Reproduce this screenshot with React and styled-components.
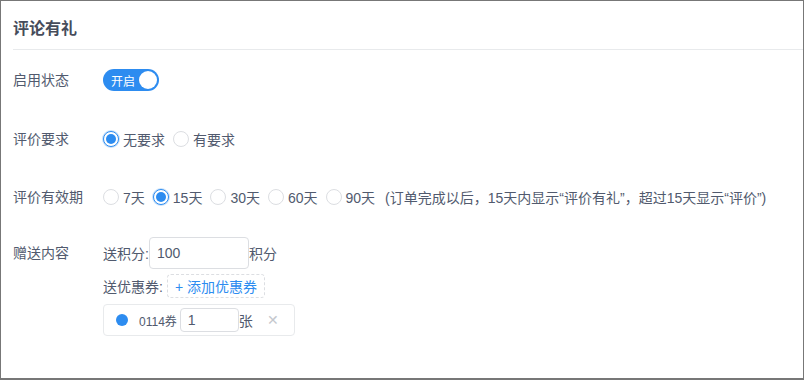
import React, { useState } from 'react';
import styled, { createGlobalStyle } from 'styled-components';

const GlobalStyle = createGlobalStyle`
  body {
    margin: 0;
    background: #fff;
    font-family: "Liberation Sans", "Noto Sans CJK SC", sans-serif;
    font-size: 14px;
    color: #515a6e;
  }
  * { box-sizing: border-box; }
`;

const Frame = styled.div`
  width: 804px;
  height: 380px;
  border: 1px solid #777;
  border-bottom-width: 2px;
  background: #fff;
`;

const Header = styled.div`
  margin-left: 12px;
  height: 49px;
  border-bottom: 1px solid #e8eaec;
  display: flex;
  align-items: center;
  padding-top: 3px;
  font-size: 16px;
  font-weight: bold;
  color: #464c5b;
`;

const Body = styled.div`
  padding: 14px 0 0 12px;
  display: flex;
  flex-direction: column;
`;

const FormItem = styled.div`
  display: flex;
  align-items: flex-start;
  margin-bottom: ${p => p.gap ?? 26}px;
`;

const Label = styled.div`
  width: 90px;
  flex: none;
  line-height: 32px;
  height: 32px;
`;

const Control = styled.div`
  display: flex;
  flex-direction: ${p => (p.column ? 'column' : 'row')};
  align-items: ${p => (p.column ? 'flex-start' : 'center')};
  min-height: 32px;
`;

const Switch = styled.button`
  width: 56px;
  height: 22px;
  border: none;
  border-radius: 11px;
  background: #2d8cf0;
  padding: 0 2px 0 8px;
  display: flex;
  align-items: center;
  justify-content: space-between;
  color: #fff;
  font-family: inherit;
  font-size: 12px;
  cursor: pointer;
`;

const Knob = styled.span`
  width: 18px;
  height: 18px;
  border-radius: 50%;
  background: #fff;
`;

const RadioWrap = styled.label`
  display: inline-flex;
  align-items: center;
  margin-right: 8px;
  cursor: pointer;
  white-space: nowrap;
`;

const RadioDot = styled.span`
  width: 16px;
  height: 16px;
  border-radius: 50%;
  margin-right: 4px;
  border: 1px solid ${p => (p.checked ? '#2d8cf0' : '#dcdee2')};
  box-shadow: ${p => (p.checked ? '0 0 0 1px rgba(45,140,240,0.25)' : 'none')};
  background: #fff;
  display: flex;
  align-items: center;
  justify-content: center;
  &::after {
    content: '';
    width: 10px;
    height: 10px;
    border-radius: 50%;
    background: ${p => (p.checked ? '#2d8cf0' : 'transparent')};
  }
`;

const Note = styled.span`
  margin-left: 2px;
  white-space: nowrap;
`;

const SubRow = styled.div`
  display: flex;
  align-items: center;
  height: ${p => p.h}px;
  margin-bottom: ${p => p.mb ?? 0}px;
`;

const Input = styled.input`
  width: ${p => p.w}px;
  height: ${p => p.h}px;
  border: 1px solid #dcdee2;
  border-radius: 4px;
  padding: 0 7px;
  font-family: inherit;
  font-size: 14px;
  color: #515a6e;
  outline: none;
`;

const DashedButton = styled.button`
  height: 24px;
  margin-left: 4px;
  padding: 0 7px;
  border: 1px dashed #dcdee2;
  border-radius: 4px;
  background: #fff;
  color: #2d8cf0;
  font-family: inherit;
  font-size: 14px;
  cursor: pointer;
`;

const CouponBox = styled.div`
  width: 192px;
  height: 32px;
  border: 1px solid #e8eaec;
  border-radius: 4px;
  display: flex;
  align-items: center;
  padding: 0 15px 0 12px;
`;

const Dot = styled.span`
  width: 12px;
  height: 12px;
  border-radius: 50%;
  background: #2d8cf0;
  margin-right: 11px;
`;

const CouponName = styled.span`
  font-size: 12px;
  margin-right: 3px;
`;

const Close = styled.span`
  margin-left: auto;
  color: #c5c8ce;
  font-size: 14px;
  cursor: pointer;
`;

const Radio = ({ checked, children, onClick }) => (
  <RadioWrap onClick={onClick}>
    <RadioDot checked={checked} />
    <span>{children}</span>
  </RadioWrap>
);

export default function App() {
  const [req, setReq] = useState('none');
  const [days, setDays] = useState('15');
  const dayOptions = ['7', '15', '30', '60', '90'];

  return (
    <>
      <GlobalStyle />
      <Frame>
        <Header>评论有礼</Header>
        <Body>
          <FormItem gap={27}>
            <Label>启用状态</Label>
            <Control>
              <Switch>
                开启
                <Knob />
              </Switch>
            </Control>
          </FormItem>

          <FormItem gap={26}>
            <Label>评价要求</Label>
            <Control>
              <Radio checked={req === 'none'} onClick={() => setReq('none')}>无要求</Radio>
              <Radio checked={req === 'has'} onClick={() => setReq('has')}>有要求</Radio>
            </Control>
          </FormItem>

          <FormItem gap={24}>
            <Label>评价有效期</Label>
            <Control>
              {dayOptions.map(d => (
                <Radio key={d} checked={days === d} onClick={() => setDays(d)}>
                  {d}天
                </Radio>
              ))}
              <Note>(订单完成以后，15天内显示“评价有礼”，超过15天显示“评价”)</Note>
            </Control>
          </FormItem>

          <FormItem gap={0}>
            <Label>赠送内容</Label>
            <Control column>
              <SubRow h={32} mb={5}>
                送积分:
                <Input w={100} h={32} defaultValue="100" />
                积分
              </SubRow>
              <SubRow h={24} mb={6}>
                送优惠券:
                <DashedButton>+ 添加优惠券</DashedButton>
              </SubRow>
              <CouponBox>
                <Dot />
                <CouponName>0114券</CouponName>
                <Input w={59} h={24} defaultValue="1" />
                张
                <Close>✕</Close>
              </CouponBox>
            </Control>
          </FormItem>
        </Body>
      </Frame>
    </>
  );
}
